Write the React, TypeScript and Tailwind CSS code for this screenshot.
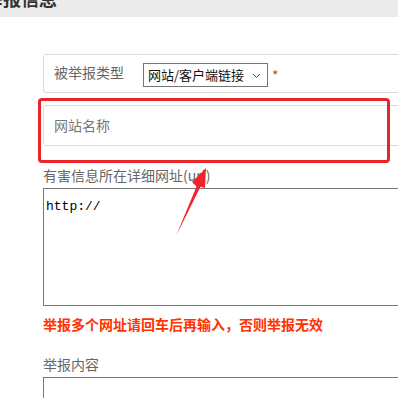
import React from "react";

const font = { fontFamily: '"Microsoft YaHei", "Noto Sans CJK SC", "Noto Sans", sans-serif' };

export default function App() {
  return (
    <div className="relative w-[398px] h-[398px] overflow-hidden bg-white" style={font}>
      <div className="h-[17px] bg-[#ebebeb] overflow-hidden">
        <div className="ml-[-15px] mt-[-14px] text-[18px] font-bold leading-[24px] text-[#333]">举报信息</div>
      </div>

      <div className="pl-[43px] w-[460px]">
        <div className="mt-[37px] h-[39px] rounded-[3px] border border-[#dcdcdc] flex items-center pl-[10px]">
          <span className="text-[14px] text-[#666] w-[89px] -mt-[3px]">被举报类型</span>
          <div className="mt-[2px] h-[24px] w-[125px] border border-[#767676] flex items-center pl-[4px] pr-[6px] justify-between">
            <span className="text-[13px] text-[#111]">网站/客户端链接</span>
            <svg width="9" height="6" viewBox="0 0 9 6" className="mt-[2px]">
              <path d="M1 1l3.5 3.5L8 1" fill="none" stroke="#444" strokeWidth="1" />
            </svg>
          </div>
          <span className="ml-[4px] mt-[4px] text-[14px] text-[#e53935]">*</span>
        </div>

        <div className="mt-[12px] h-[41px] rounded-[3px] border border-[#dcdcdc] flex items-center pl-[10px]">
          <span className="text-[14px] text-[#777]">网站名称</span>
        </div>

        <div className="mt-[19px] text-[14px] leading-[20px] text-[#666]">有害信息所在详细网址(url)</div>
        <div className="mt-[3px] h-[118px] border border-[#767676] px-[2px] py-[2px]">
          <span className="text-[13px] leading-[16px] text-black" style={{ fontFamily: '"Liberation Mono", monospace' }}>
            http://
          </span>
        </div>

        <div className="mt-[8px] text-[14px] leading-[20px] font-bold text-[#ff3300]">举报多个网址请回车后再输入，否则举报无效</div>

        <div className="mt-[20px] text-[14px] leading-[20px] text-[#666]">举报内容</div>
        <div className="mt-[3px] h-[60px] border border-[#767676]" />
      </div>

      <div className="absolute left-[38px] top-[98px] w-[352px] h-[65px] rounded-[4px] border-[3px] border-[#e8262a]" />

      <svg className="absolute left-0 top-0" width="398" height="398" viewBox="0 0 398 398">
        <polygon
          points="176,236 196.5,186.5 192,182 206,168 205,188 200.5,186.8"
          fill="#f0242a"
        />
      </svg>
    </div>
  );
}
